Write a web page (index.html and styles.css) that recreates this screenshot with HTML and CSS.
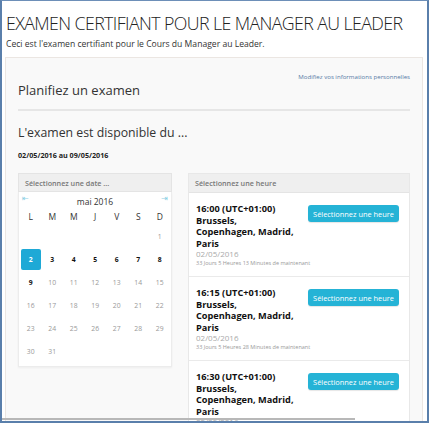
FILE: index.html
```html
<!DOCTYPE html>
<html>
<head>
<meta charset="utf-8">
<link rel="stylesheet" href="styles.css">
</head>
<body>
<div class="frame">
  <h1 class="title">EXAMEN CERTIFIANT POUR LE MANAGER AU LEADER</h1>
  <p class="intro">Ceci est l'examen certifiant pour le Cours du Manager au Leader.</p>
  <div class="panel">
    <div class="edit-row"><a class="edit-link">Modifiez vos informations personnelles</a></div>
    <h2 class="plan">Planifiez un examen</h2>
    <div class="rule"></div>
    <h3 class="avail">L'examen est disponible du ...</h3>
    <div class="range">02/05/2016 au 09/05/2016</div>
    <div class="cols">
      <div class="datebox">
        <div class="box-head">Sélectionnez une date ...</div>
        <div class="cal">
          <div class="cal-nav">
            <span class="arrow">&#8676;</span>
            <span class="month">mai 2016</span>
            <span class="arrow">&#8677;</span>
          </div>
          <div class="grid">
            <span class="wd">L</span><span class="wd">M</span><span class="wd">M</span><span class="wd">J</span><span class="wd">V</span><span class="wd">S</span><span class="wd">D</span>
            <span></span><span></span><span></span><span></span><span></span><span></span><span class="d off">1</span>
            <span class="d sel">2</span><span class="d on">3</span><span class="d on">4</span><span class="d on">5</span><span class="d on">6</span><span class="d on">7</span><span class="d on">8</span>
            <span class="d on">9</span><span class="d off">10</span><span class="d off">11</span><span class="d off">12</span><span class="d off">13</span><span class="d off">14</span><span class="d off">15</span>
            <span class="d off">16</span><span class="d off">17</span><span class="d off">18</span><span class="d off">19</span><span class="d off">20</span><span class="d off">21</span><span class="d off">22</span>
            <span class="d off">23</span><span class="d off">24</span><span class="d off">25</span><span class="d off">26</span><span class="d off">27</span><span class="d off">28</span><span class="d off">29</span>
            <span class="d off">30</span><span class="d off">31</span>
          </div>
        </div>
      </div>
      <div class="timebox">
        <div class="box-head">Sélectionnez une heure</div>
        <div class="slot">
          <div class="slot-info">
            <div class="slot-time">16:00 (UTC+01:00) Brussels, Copenhagen, Madrid, Paris</div>
            <div class="slot-date">02/05/2016</div>
            <div class="slot-rel">33 Jours 5 Heures 13 Minutes de maintenant</div>
          </div>
          <button class="btn">Sélectionnez une heure</button>
        </div>
        <div class="slot">
          <div class="slot-info">
            <div class="slot-time">16:15 (UTC+01:00) Brussels, Copenhagen, Madrid, Paris</div>
            <div class="slot-date">02/05/2016</div>
            <div class="slot-rel">33 Jours 5 Heures 28 Minutes de maintenant</div>
          </div>
          <button class="btn">Sélectionnez une heure</button>
        </div>
        <div class="slot">
          <div class="slot-info">
            <div class="slot-time">16:30 (UTC+01:00) Brussels, Copenhagen, Madrid, Paris</div>
            <div class="slot-date">02/05/2016</div>
            <div class="slot-rel">33 Jours 5 Heures 43 Minutes de maintenant</div>
          </div>
          <button class="btn">Sélectionnez une heure</button>
        </div>
      </div>
    </div>
  </div>
  <div class="hscroll"></div>
</div>
</body>
</html>
```
FILE: styles.css
```css
* { box-sizing: border-box; }
html, body { margin: 0; padding: 0; background: #ffffff; }
body { font-family: "Open Sans", "DejaVu Sans", sans-serif; color: #333; }
.frame {
  position: relative;
  width: 429px;
  height: 423px;
  overflow: hidden;
  border: 1px solid #6d8fb8;
  border-left: 2px solid #5a7fab;
  border-right: 2px solid #5a7fab;
  border-bottom: 2px solid #5a7fab;
  background: #fff;
}
.title {
  margin: 9px 0 0 4px;
  font-size: 17.8px;
  font-weight: 300;
  letter-spacing: -0.6px;
  line-height: 26px;
  color: #222;
  white-space: nowrap;
}
.intro {
  margin: 3px 0 0 4px;
  font-size: 8.6px;
  line-height: 11px;
  color: #333;
}
.panel {
  margin: 7px 4px 0 3px;
  height: 400px;
  background: #f9f9f9;
  border: 1px solid #ebe6e2;
  padding: 0 12px 0 12px;
}
.edit-row { text-align: right; padding-top: 11px; line-height: 9px; }
.edit-link { font-size: 6.1px; color: #5679a6; }
.plan {
  margin: 0;
  font-size: 13px;
  font-weight: 400;
  line-height: 18px;
  color: #333;
}
.rule {
  margin-top: 10px;
  height: 2px;
  background: #e6e6e6;
}
.avail {
  margin: 12px 0 0 0;
  font-size: 12.3px;
  font-weight: 400;
  line-height: 20px;
  color: #333;
}
.range {
  margin-top: 6px;
  font-size: 7.2px;
  font-weight: 700;
  line-height: 12px;
  color: #222;
}
.cols {
  display: flex;
  gap: 16px;
  margin-top: 12px;
  align-items: flex-start;
}
.datebox { width: 154px; }
.timebox { width: 222px; background: #fff; border: 1px solid #e8e8e8; }
.box-head {
  height: 19px;
  line-height: 18px;
  background: #efefef;
  border: 1px solid #e4e4e4;
  padding-left: 6px;
  font-size: 7.2px;
  font-weight: 600;
  color: #777;
}
.timebox .box-head { border: none; border-bottom: 1px solid #e4e4e4; }
.cal {
  background: #fff;
  border: 1px solid #ececec;
  border-top: none;
  padding: 2px 1px 3px 1px;
  box-shadow: 0 1px 2px rgba(0,0,0,0.05);
}
.cal-nav {
  display: flex;
  justify-content: space-between;
  align-items: center;
  height: 14px;
  padding: 0 2px;
}
.arrow { font-size: 8px; color: #8cd0e4; line-height: 8px; align-self: flex-start; }
.month { font-size: 8.5px; color: #333; }
.grid {
  display: grid;
  grid-template-columns: repeat(7, 21.5px);
  grid-template-rows: 17px;
  grid-auto-rows: 23px;
}
.grid span {
  display: flex;
  align-items: center;
  justify-content: center;
  font-size: 6.8px;
}
.grid .wd { font-size: 8.5px; color: #333; }
.d.off { color: #999; }
.d.on { color: #111; font-weight: 700; }
.d.sel {
  background: #1ea9d6;
  color: #fff;
  font-weight: 700;
  border-radius: 2px;
  margin: 1px 1px;
}
.slot {
  display: flex;
  justify-content: space-between;
  align-items: flex-start;
  padding: 10px 10px 0 7px;
  border-bottom: 1px solid #eaeaea;
  height: 84px;
}
.slot-info { width: 100px; }
.slot-time {
  font-size: 9.2px;
  font-weight: 700;
  line-height: 11.5px;
  color: #111;
}
.slot-date { font-size: 8px; color: #aaa; line-height: 10px; margin-top: 0; }
.slot-rel { font-size: 5.5px; color: #999; line-height: 8px; white-space: nowrap; }
.btn {
  margin-top: 2px;
  width: 91px;
  height: 17px;
  border: none;
  border-radius: 3px;
  background: #25b3d6;
  color: #fff;
  font-family: "Open Sans", sans-serif;
  font-size: 7.4px;
  padding: 0;
  box-shadow: 0 1px 1px rgba(0,0,0,0.1);
}
.hscroll {
  position: absolute;
  left: 0;
  bottom: 1px;
  width: 353px;
  height: 2px;
  background: #b8b8b8;
}
```
